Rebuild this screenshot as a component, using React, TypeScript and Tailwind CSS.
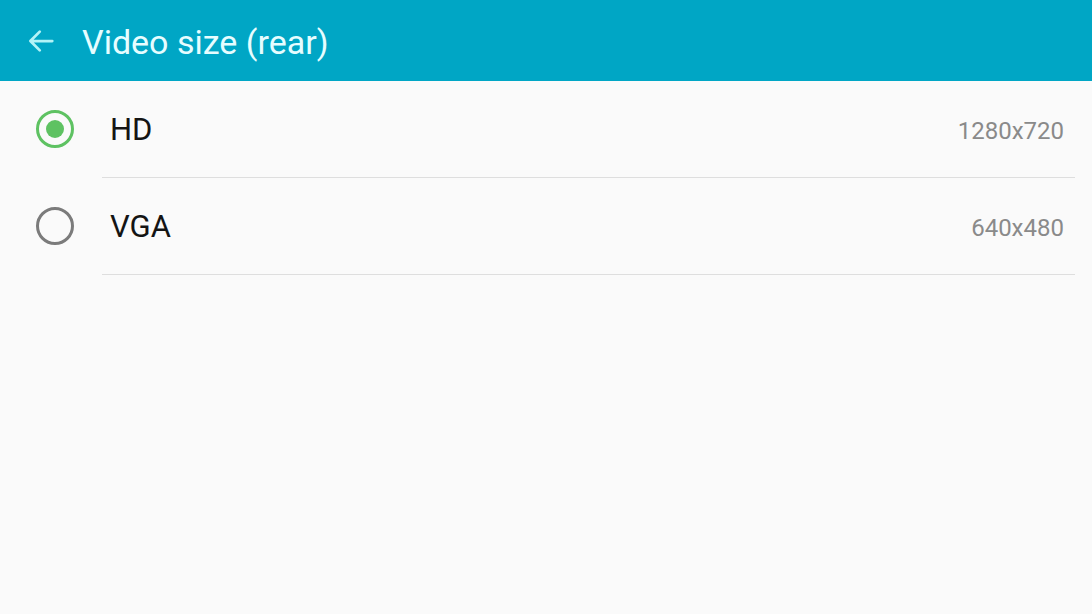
import { useState } from 'react'

const OPTIONS = [
  { id: 'hd', label: 'HD', size: '1280x720' },
  { id: 'vga', label: 'VGA', size: '640x480' },
]

function Radio({ checked }: { checked: boolean }) {
  return checked ? (
    <span className="flex h-[38px] w-[38px] items-center justify-center rounded-full border-[3px] border-[#5ec262]">
      <span className="h-[18px] w-[18px] rounded-full bg-[#5ec262]" />
    </span>
  ) : (
    <span className="h-[38px] w-[38px] rounded-full border-[3px] border-[#7b7b7b]" />
  )
}

export default function App() {
  const [selected, setSelected] = useState('hd')

  return (
    <div className="flex h-[614px] w-[1092px] flex-col bg-[#fafafa] font-['Roboto','Liberation_Sans',sans-serif]">
      {/* Action bar */}
      <header className="flex h-[81px] shrink-0 items-center bg-[#00a6c5] pl-[26px]">
        <svg width="30" height="30" viewBox="0 0 24 24" fill="none" stroke="#b3f3f7" strokeWidth="2.2" strokeLinecap="round" strokeLinejoin="round">
          <path d="M21 12H3.5M11 4.5 3.5 12l7.5 7.5" />
        </svg>
        <h1 className="ml-[26px] pt-[2px] text-[34px] leading-none text-[#e6fdff]">Video size (rear)</h1>
      </header>

      {/* Options */}
      <ul className="flex flex-col">
        {OPTIONS.map(o => (
          <li key={o.id}>
            <button
              className="flex h-[97px] w-full items-stretch text-left"
              onClick={() => setSelected(o.id)}
            >
              <div className="flex w-[102px] shrink-0 items-center pb-[2px] pl-[36px]">
                <Radio checked={selected === o.id} />
              </div>
              <div className="mr-[17px] flex flex-1 items-center border-b-[1.5px] border-[#dedede] pl-[8px] pt-[3px]">
                <span className="flex-1 text-[31px] text-[#141414]">{o.label}</span>
                <span className="pr-[11px] text-[24px] text-[#8a8a8a]">{o.size}</span>
              </div>
            </button>
          </li>
        ))}
      </ul>
    </div>
  )
}
